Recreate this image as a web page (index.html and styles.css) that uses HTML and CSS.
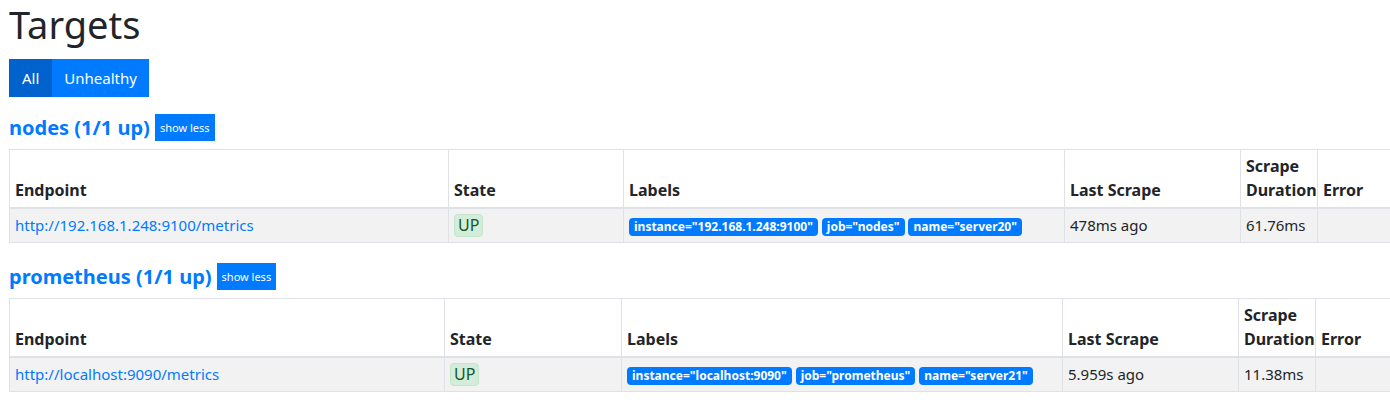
FILE: index.html
```html
<!DOCTYPE html>
<html>
<head>
<meta charset="utf-8">
<link rel="stylesheet" href="styles.css">
<title>Targets</title>
</head>
<body>
<div class="container">
  <h1 class="title">Targets</h1>
  <div class="btn-group">
    <button class="btn active">All</button>
    <button class="btn">Unhealthy</button>
  </div>

  <div class="job-header first">
    <a class="job-name" href="#job-nodes">nodes (1/1 up)</a>
    <button class="btn-xs">show less</button>
  </div>
  <table class="targets t1">
    <thead>
      <tr>
        <th class="c-endpoint">Endpoint</th>
        <th class="c-state">State</th>
        <th class="c-labels">Labels</th>
        <th class="c-last">Last Scrape</th>
        <th class="c-dur">Scrape Duration</th>
        <th class="c-err">Error</th>
      </tr>
    </thead>
    <tbody>
      <tr>
        <td><a href="#">http://192.168.1.248:9100/metrics</a></td>
        <td><span class="state">UP</span></td>
        <td><span class="badge">instance="192.168.1.248:9100"</span> <span class="badge">job="nodes"</span> <span class="badge">name="server20"</span></td>
        <td>478ms ago</td>
        <td>61.76ms</td>
        <td></td>
      </tr>
    </tbody>
  </table>

  <div class="job-header">
    <a class="job-name" href="#job-prometheus">prometheus (1/1 up)</a>
    <button class="btn-xs">show less</button>
  </div>
  <table class="targets t2">
    <thead>
      <tr>
        <th class="c-endpoint">Endpoint</th>
        <th class="c-state">State</th>
        <th class="c-labels">Labels</th>
        <th class="c-last">Last Scrape</th>
        <th class="c-dur">Scrape Duration</th>
        <th class="c-err">Error</th>
      </tr>
    </thead>
    <tbody>
      <tr>
        <td><a href="#">http://localhost:9090/metrics</a></td>
        <td><span class="state">UP</span></td>
        <td><span class="badge">instance="localhost:9090"</span> <span class="badge">job="prometheus"</span> <span class="badge">name="server21"</span></td>
        <td>5.959s ago</td>
        <td>11.38ms</td>
        <td></td>
      </tr>
    </tbody>
  </table>
</div>
</body>
</html>
```

FILE: styles.css
```css
html, body {
  margin: 0;
  padding: 0;
  background: #fff;
  overflow: hidden;
}
body {
  font-family: "Noto Sans", "Open Sans", sans-serif;
  font-size: 15px;
  line-height: 1.5;
  color: #212529;
}
.container {
  padding-left: 9px;
  width: 1500px;
}
.title {
  font-size: 38px;
  font-weight: 400;
  line-height: 48px;
  margin: 0 0 11px;
}
.btn-group {
  display: flex;
}
.btn {
  font-family: inherit;
  font-size: 15px;
  line-height: 24px;
  padding: 7px 12px;
  border: 0;
  background: #007bff;
  color: #fff;
  border-radius: 0;
  margin: 0;
}
.btn.active {
  background: #0062cc;
  padding: 7px 13px;
}
.job-header {
  display: flex;
  align-items: center;
  gap: 5px;
  height: 27px;
  margin: 20px 0 8px;
}
.job-header.first {
  margin-top: 17px;
}
.job-name {
  color: #007bff;
  font-weight: 700;
  font-size: 20px;
  text-decoration: none;
}
.btn-xs {
  font-family: inherit;
  background: #007bff;
  color: #fff;
  border: 0;
  font-size: 11px;
  line-height: 17px;
  padding: 5px 5px;
  border-radius: 0;
}
.targets {
  border-collapse: collapse;
  table-layout: fixed;
  width: 1480px;
}
.targets th,
.targets td {
  border: 1px solid #dee2e6;
  padding: 5px 5px;
  text-align: left;
}
.targets th {
  vertical-align: bottom;
  font-weight: 700;
  font-size: 16px;
  border-bottom: 2px solid #dee2e6;
  line-height: 24px;
  padding: 4px 5px 5px;
}
.targets td {
  vertical-align: middle;
  line-height: 23px;
}
.targets tbody tr {
  background: #f2f2f2;
}
.targets a {
  color: #007bff;
  text-decoration: none;
}
.t1 .c-endpoint { width: 428px; }
.t1 .c-state { width: 164px; }
.t1 .c-labels { width: 430px; }
.t1 .c-last { width: 165px; }
.t1 .c-dur { width: 66px; }
.t2 .c-endpoint { width: 424px; }
.t2 .c-state { width: 166px; }
.t2 .c-labels { width: 430px; }
.t2 .c-last { width: 165px; }
.t2 .c-dur { width: 66px; }
.state {
  display: inline-block;
  background: #d4edda;
  border: 1px solid #c3e6cb;
  color: #155724;
  border-radius: 4px;
  padding: 0 3px;
  line-height: 21px;
  font-size: 16px;
}
.badge {
  display: inline-block;
  background: #007bff;
  color: #fff;
  font-size: 12px;
  font-weight: 700;
  line-height: 12px;
  padding: 3px 5px;
  border-radius: 4px;
  vertical-align: middle;
}
```
